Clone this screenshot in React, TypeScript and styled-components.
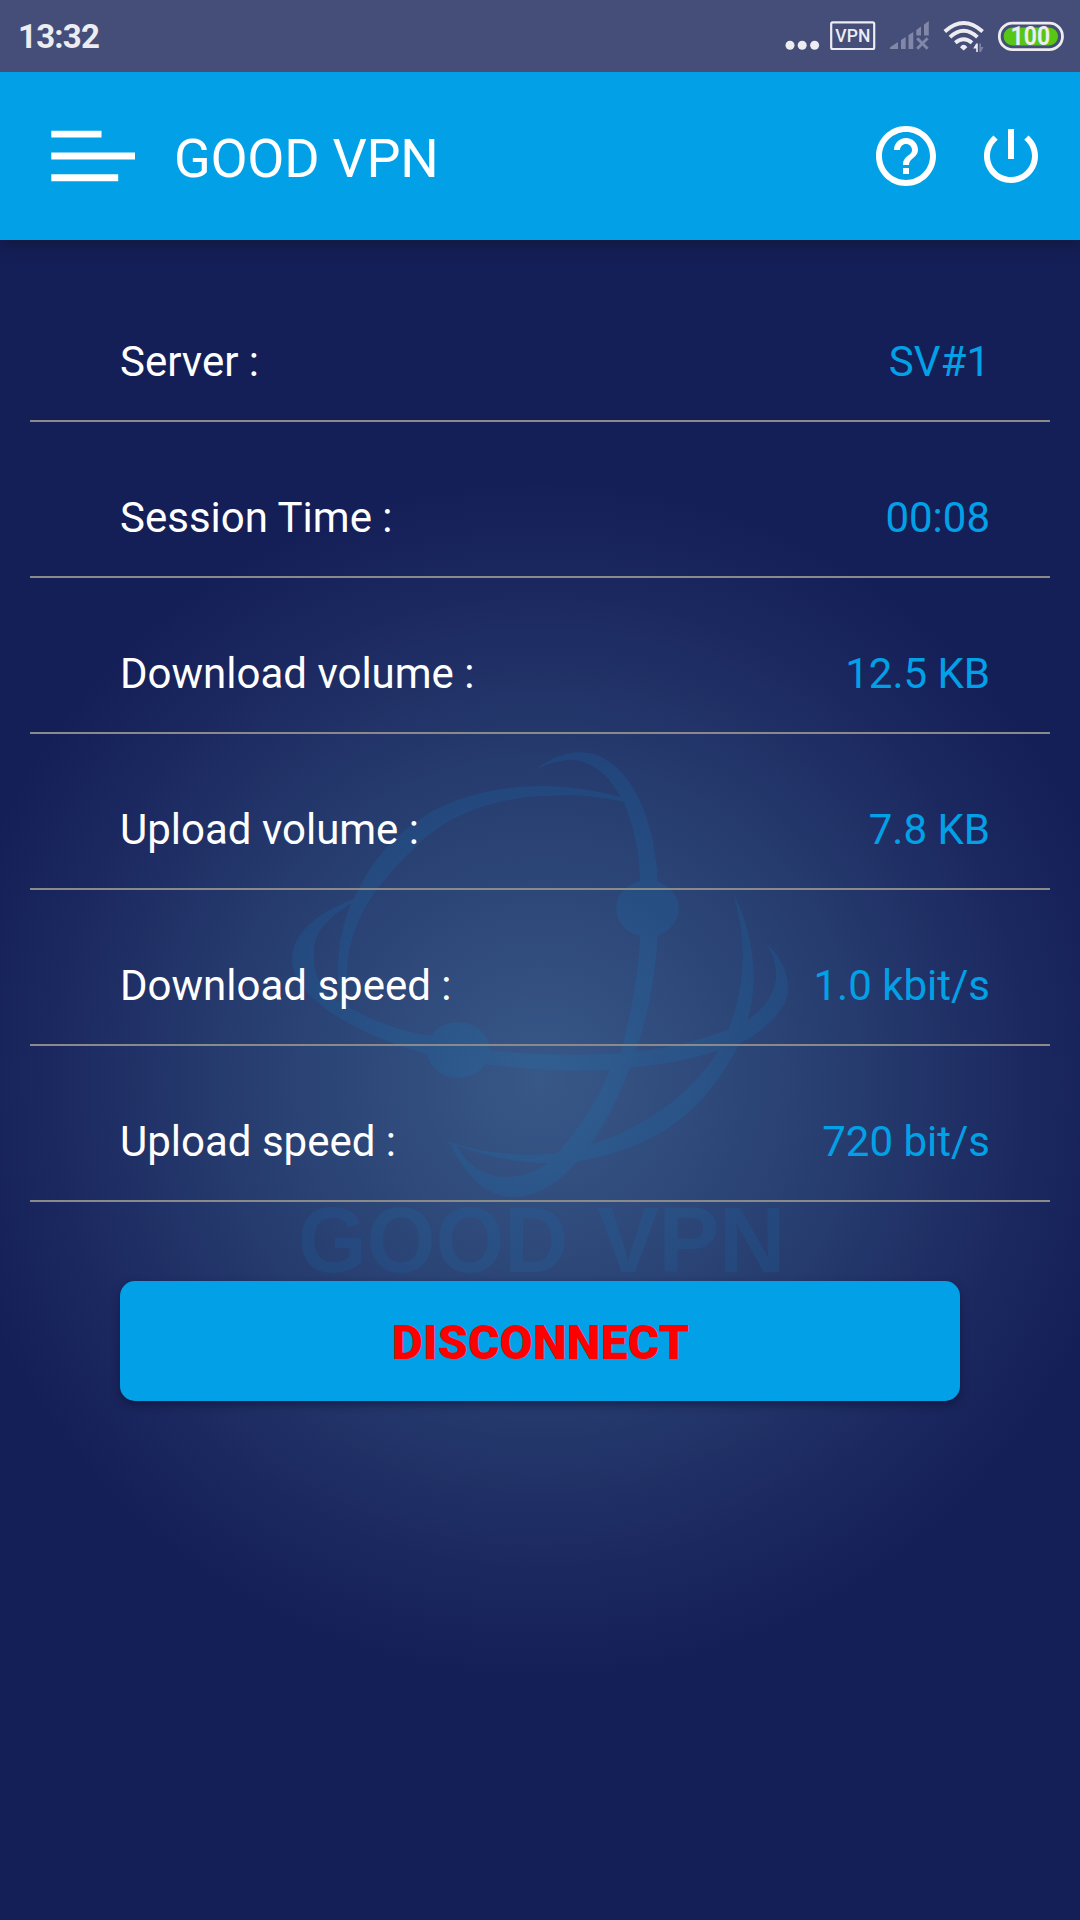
import React from 'react';
import styled, { createGlobalStyle } from 'styled-components';

const GlobalStyle = createGlobalStyle`
  *, *::before, *::after { box-sizing: border-box; }
  html, body { margin: 0; padding: 0; background: #151f57; }
  body { font-family: Roboto, "Liberation Sans", sans-serif; }
`;

const Screen = styled.div`
  display: flex;
  flex-direction: column;
  width: 1080px;
  height: 1920px;
  overflow: hidden;
`;

const StatusBar = styled.div`
  flex: none;
  position: relative;
  z-index: 2;
  display: flex;
  align-items: center;
  justify-content: space-between;
  height: 72px;
  padding-left: 18px;
  background: #454d79;
  color: #ececf1;
`;

const Clock = styled.span`
  font-size: 33px;
  font-weight: 700;
  line-height: 40px;
  padding-top: 2px;
  letter-spacing: -0.8px;
`;

const StatusIcons = styled.svg`
  display: block;
  width: 320px;
  height: 72px;
`;

const Header = styled.header`
  flex: none;
  position: relative;
  z-index: 1;
  display: flex;
  align-items: center;
  height: 168px;
  padding: 0 33px 0 51px;
  background: #02a1e7;
  box-shadow: 0 4px 14px rgba(14, 18, 45, 0.6);
  color: #fff;
`;

const IconButton = styled.button<{ $w: number; $h: number }>`
  display: block;
  width: ${(p) => p.$w}px;
  height: ${(p) => p.$h}px;
  padding: 0;
  border: 0;
  background: none;
  color: inherit;

  svg { display: block; width: 100%; height: 100%; }
`;

const Title = styled.h1`
  flex: 1;
  margin: 0 0 0 39px;
  padding-top: 5px;
  font-size: 54px;
  font-weight: 400;
  line-height: 64px;
  letter-spacing: -0.3px;
`;

const Actions = styled.div`
  display: flex;
  gap: 33px;
`;

const Content = styled.main`
  flex: 1;
  display: flex;
  flex-direction: column;
  align-items: center;
  position: relative;
  padding: 26px 30px 0;
  background: radial-gradient(circle 600px at 540px 840px,
    #385888 0%, #273d70 50%, #1a265e 85%, #151f57 100%) #151f57;
`;

const Watermark = styled.svg`
  position: absolute;
  left: 270px;
  top: 490px;
  width: 540px;
  height: 560px;
  pointer-events: none;
`;

const Stats = styled.dl`
  position: relative;
  width: 100%;
  margin: 0 0 79px;
`;

const Row = styled.div`
  display: flex;
  justify-content: space-between;
  height: 156px;
  padding: 71px 60px 0 90px;
  border-bottom: 2px solid #8b8a8a;
  font-size: 42px;
  line-height: 50px;
`;

const Label = styled.dt`
  color: #fff;
`;

const Value = styled.dd`
  margin: 0;
  color: #02a1e7;
`;

const DisconnectButton = styled.button`
  position: relative;
  width: 840px;
  height: 120px;
  padding: 4px 0 0 1px;
  border: 0;
  border-radius: 15px;
  background: #02a1e7;
  box-shadow: 0 4px 8px rgba(10, 14, 45, 0.5);
  color: #f00;
  font: 900 48px/56px Roboto, "Liberation Sans", sans-serif;
  letter-spacing: 0.2px;
`;

const stats = [
  { label: 'Server :', value: 'SV#1' },
  { label: 'Session Time :', value: '00:08' },
  { label: 'Download volume :', value: '12.5 KB' },
  { label: 'Upload volume :', value: '7.8 KB' },
  { label: 'Download speed :', value: '1.0 kbit/s' },
  { label: 'Upload speed :', value: '720 bit/s' },
];

function StatusGlyphs() {
  return (
    <StatusIcons viewBox="0 0 320 72" fill="#ececf1">
      <circle cx="30" cy="45.3" r="4.5" />
      <circle cx="42.2" cy="45.3" r="4.5" />
      <circle cx="54.6" cy="45.3" r="4.5" />
      <rect x="71.2" y="22.4" width="43" height="26.6" rx="1.5" fill="none" stroke="#ececf1" strokeWidth="2.2" />
      <text x="92.8" y="41.8" fontSize="17.5" fontWeight="500" textAnchor="middle" textLength="35">VPN</text>
      <g fill="#8187a7">
        <path d="M130 49V47.2L138 42V49Z" />
        <path d="M141 49V40L145.7 37V49Z" />
        <path d="M148.5 49V35L153.3 32V49Z" />
        <path d="M156.3 35.5V30L161 26.5V35.5Z" />
        <path d="M164 35.5V24.5L168.8 21V35.5Z" />
        <path d="M157.2 38.2L167.6 48.8M167.6 38.2L157.2 48.8" stroke="#8187a7" strokeWidth="3" />
      </g>
      <g fill="none" stroke="#ececf1" strokeWidth="3.8">
        <path d="M184.8 31.5Q203.6 14.5 222.6 31.5" />
        <path d="M190 37.2Q203.6 24.5 217.4 37.2" />
        <path d="M195.3 42.8Q203.6 35.5 212 42.8" />
      </g>
      <path d="M200 47.2Q203.6 42.5 207.4 47.2L203.6 50.6Z" />
      <path d="M213.2 48.5L216.2 43.5H217.8V52H216.2V48.5Z" />
      <path d="M219.3 43.5H221V47H223.5L221 52H219.3Z" fill="#7c82a3" />
      <rect x="239.3" y="23.2" width="63.2" height="26.4" rx="13.2" fill="none" stroke="#ececf1" strokeWidth="2.8" />
      <rect x="243.6" y="27.4" width="54.4" height="18" rx="9" fill="#57c615" />
      <text x="250.6" y="45.2" fontSize="26" fontWeight="700" textLength="39.5" lengthAdjust="spacingAndGlyphs">100</text>
    </StatusIcons>
  );
}

function OrbitMark() {
  return (
    <Watermark viewBox="0 0 1568 1568" preserveAspectRatio="none" fill="#0e8ad0" opacity="0.14" aria-hidden="true">
      <path
        fillRule="evenodd"
        d="M765 115C830 65 890 52 950 70C1060 115 1118 260 1126 425V576C1118 690 1100 790 1062 900Q1185 890 1330 840C1372 745 1395 600 1341 448C1400 560 1425 690 1386 812C1460 765 1500 690 1441 597C1500 650 1525 725 1485 780C1455 822 1410 855 1362 878C1270 1060 1130 1170 892 1208C830 1275 770 1308 700 1308C620 1300 570 1250 525 1160L495 1146C610 1185 720 1195 832 1186C900 1115 950 1040 987 952C870 957 750 950 628 936L460 908C300 870 120 780 75 690C35 600 110 520 242 474C340 270 520 155 810 157Q920 162 1018 188C970 100 900 75 850 86Q805 92 765 115Z
        M1027 201C940 183 880 180 810 184C640 188 500 245 420 330C290 450 225 550 223 690Q223 740 230 778C300 815 380 845 476 857L633 896C760 910 890 912 1018 906C1050 790 1068 690 1075 576V425C1073 340 1055 265 1027 201Z
        M236 486C210 540 197 610 197 690Q197 730 203 763C150 730 125 690 128 630C125 580 150 535 236 486Z
        M1302 898Q1180 935 1044 945C1015 1025 975 1100 930 1162C1080 1115 1215 1030 1302 898Z
        M540 1163C590 1250 690 1285 808 1213C710 1210 630 1195 540 1163Z"
      />
      <ellipse cx="1096" cy="500" rx="91" ry="79" />
      <ellipse cx="547" cy="896" rx="91" ry="78" />
      <g transform="scale(2.904 2.8)" fontFamily="Liberation Sans, sans-serif" fontWeight="700" fontSize="92" opacity="0.85">
        <text x="28" y="542" textLength="270" lengthAdjust="spacingAndGlyphs">GOOD</text>
        <text x="327.5" y="542" textLength="188" lengthAdjust="spacing">VPN</text>
      </g>
    </Watermark>
  );
}

export default function App() {
  return (
    <>
      <GlobalStyle />
      <Screen>
        <StatusBar>
          <Clock>13:32</Clock>
          <StatusGlyphs />
        </StatusBar>
        <Header>
          <IconButton $w={84} $h={52} aria-label="Menu">
            <svg viewBox="0 0 84 52" fill="#fff">
              <path d="M0.3 0.8H50.5V7.6H0.3ZM0.3 22.5H84V29.4H0.3ZM0.3 44.3H67.2V51.2H0.3Z" />
            </svg>
          </IconButton>
          <Title>GOOD VPN</Title>
          <Actions>
            <IconButton $w={72} $h={72} aria-label="Help">
              <svg viewBox="0 0 24 24" fill="#fff">
                <path d="M11 18h2v-2h-2v2zm1-16C6.48 2 2 6.48 2 12s4.48 10 10 10 10-4.48 10-10S17.52 2 12 2zm0 18c-4.41 0-8-3.59-8-8s3.59-8 8-8 8 3.59 8 8-3.59 8-8 8zm0-14c-2.21 0-4 1.79-4 4h2c0-1.1.9-2 2-2s2 .9 2 2c0 2-3 1.75-3 5h2c0-2.25 3-2.5 3-5 0-2.21-1.79-4-4-4z" />
              </svg>
            </IconButton>
            <IconButton $w={72} $h={72} aria-label="Power">
              <svg viewBox="0 0 24 24" fill="#fff">
                <path d="M13 3h-2v10h2V3zm4.83 2.17l-1.42 1.42C17.99 7.86 19 9.81 19 12c0 3.87-3.13 7-7 7s-7-3.13-7-7c0-2.19 1.01-4.14 2.58-5.42L6.17 5.17C4.23 6.82 3 9.26 3 12c0 4.97 4.03 9 9 9s9-4.03 9-9c0-2.74-1.23-5.18-3.17-6.83z" />
              </svg>
            </IconButton>
          </Actions>
        </Header>
        <Content>
          <OrbitMark />
          <Stats>
            {stats.map((s) => (
              <Row key={s.label}>
                <Label>{s.label}</Label>
                <Value>{s.value}</Value>
              </Row>
            ))}
          </Stats>
          <DisconnectButton>DISCONNECT</DisconnectButton>
        </Content>
      </Screen>
    </>
  );
}
